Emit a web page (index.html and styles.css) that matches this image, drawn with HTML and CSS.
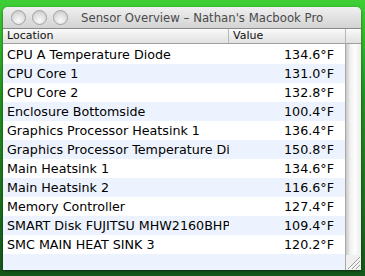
FILE: index.html
```html
<!DOCTYPE html>
<html lang="en">
<head>
  <meta charset="UTF-8">
  <title>Sensor Overview</title>
  <link rel="stylesheet" href="styles.css">
</head>
<body>
  <div class="window">
    <div class="titlebar">
      <div class="lights">
        <span class="light"></span>
        <span class="light"></span>
        <span class="light"></span>
      </div>
      <div class="title">Sensor Overview – Nathan's Macbook Pro</div>
    </div>
    <div class="content">
      <div class="table">
        <div class="head">
          <div class="col-loc">Location</div>
          <div class="col-val">Value</div>
        </div>
        <div id="rows" class="rows"></div>
      </div>
      <div class="scroll">
        <div class="scroll-head"></div>
        <div class="scroll-track"></div>
        <div class="grip">
          <svg width="13" height="13" viewBox="0 0 13 13">
            <path d="M12 4 L4 12 M12 8 L8 12 M12 0 L0 12" stroke="#9a9a9a" stroke-width="1"/>
            <path d="M12 5 L5 12 M12 9 L9 12 M12 1 L1 12" stroke="#fff" stroke-width="1"/>
          </svg>
        </div>
      </div>
    </div>
  </div>

  <script>
    const sensors = [
      ['CPU A Temperature Diode', '134.6°F'],
      ['CPU Core 1', '131.0°F'],
      ['CPU Core 2', '132.8°F'],
      ['Enclosure Bottomside', '100.4°F'],
      ['Graphics Processor Heatsink 1', '136.4°F'],
      ['Graphics Processor Temperature Diode', '150.8°F'],
      ['Main Heatsink 1', '134.6°F'],
      ['Main Heatsink 2', '116.6°F'],
      ['Memory Controller', '127.4°F'],
      ['SMART Disk FUJITSU MHW2160BHP', '109.4°F'],
      ['SMC MAIN HEAT SINK 3', '120.2°F']
    ];
    const rows = document.getElementById('rows');
    rows.innerHTML = sensors.map(s => `
      <div class="row">
        <div class="col-loc">${s[0]}</div>
        <div class="col-val">${s[1]}</div>
      </div>
    `).join('') + '<div class="row filler"></div>';
  </script>
</body>
</html>
```

FILE: styles.css
```css
* { box-sizing: border-box; margin: 0; padding: 0; }
body {
  width: 365px;
  height: 276px;
  overflow: hidden;
  padding: 7px 4px 6px 3px;
  background: linear-gradient(180deg, #3fcf35 0%, #22921e 35%, #15561a 100%);
  font-family: "DejaVu Sans", sans-serif;
}
.window {
  height: 263px;
  display: flex;
  flex-direction: column;
  background: #fff;
  border-radius: 5px 5px 0 0;
  overflow: hidden;
  box-shadow: 0 1px 3px rgba(0,0,0,0.5);
}
.titlebar {
  height: 22px;
  flex: none;
  display: flex;
  align-items: center;
  background: linear-gradient(180deg, #f0f0f0 0%, #dedede 60%, #d4d4d4 100%);
  border-bottom: 1px solid #8a8a8a;
}
.lights {
  flex: none;
  display: flex;
  padding-left: 8px;
}
.light {
  flex: none;
  width: 15px;
  height: 15px;
  border-radius: 50%;
  border: 1px solid #a2a2a2;
  background: radial-gradient(circle at 50% 72%, #fafafa 0%, #dedede 55%, #c2c2c2 100%);
}
.light + .light { margin-left: 6px; }
.title {
  flex: none;
  margin-left: 13px;
  font-family: "DejaVu Sans Condensed", "DejaVu Sans", sans-serif;
  font-size: 13px;
  color: #4a4a4a;
  white-space: nowrap;
}
.content {
  flex: 1;
  display: flex;
  min-height: 0;
}
.table {
  flex: 1;
  display: flex;
  flex-direction: column;
  min-width: 0;
}
.head {
  height: 15px;
  flex: none;
  display: flex;
  font-size: 11px;
  line-height: 14px;
  color: #111;
  background: linear-gradient(180deg, #fbfbfb 0%, #ececec 50%, #e2e2e2 100%);
  border-bottom: 1px solid #9e9e9e;
}
.head .col-loc {
  width: 226px;
  padding-left: 4px;
  border-right: 1px solid #b8b8b8;
}
.head .col-val {
  flex: 1;
  padding-left: 4px;
}
.rows {
  flex: 1;
  display: flex;
  flex-direction: column;
  padding-top: 1px;
}
.row {
  height: 19px;
  flex: none;
  display: flex;
  align-items: center;
  font-size: 12.7px;
  color: #000;
}
.row:nth-child(even) { background: #edf3fe; }
.row .col-loc {
  width: 226px;
  padding-left: 4px;
  white-space: nowrap;
  overflow: hidden;
  text-overflow: clip;
}
.row .col-val {
  flex: 1;
  text-align: right;
  padding-right: 11px;
}
.row.filler { flex: 1; }
.scroll {
  width: 16px;
  flex: none;
  display: flex;
  flex-direction: column;
}
.scroll-head {
  height: 15px;
  background: linear-gradient(180deg, #fbfbfb 0%, #ececec 50%, #e2e2e2 100%);
  border-bottom: 1px solid #9e9e9e;
  border-left: 1px solid #b8b8b8;
}
.scroll-track {
  flex: 1;
  background: linear-gradient(90deg, #c9c9c9 0%, #f2f2f2 30%, #fdfdfd 60%, #ececec 100%);
  border-left: 1px solid #a8a8a8;
}
.grip {
  height: 15px;
  background: #f0f0f0;
  border-left: 1px solid #a8a8a8;
  display: flex;
  align-items: flex-end;
  justify-content: flex-end;
}
```
